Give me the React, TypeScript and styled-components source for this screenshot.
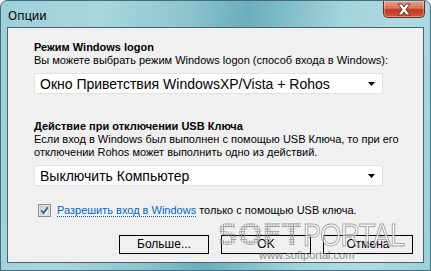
import React from "react";
import styled, { createGlobalStyle } from "styled-components";

const Global = createGlobalStyle`
  * { box-sizing: border-box; }
  html, body { margin: 0; padding: 0; background: #fff; }
`;

const Window = styled.div`
  position: relative;
  width: 431px;
  height: 271px;
  display: flex;
  flex-direction: column;
  border: 1px solid #3f6f7c;
  border-radius: 7px 7px 0 0;
  overflow: hidden;
  background: linear-gradient(
    100deg,
    #9fd0da 0%,
    #a9d6de 22%,
    #8cc3cf 40%,
    #6aaebc 52%,
    #7fbcc8 60%,
    #a3d3dc 72%,
    #b1dbe2 86%,
    #9ccfd9 100%
  );
  font-family: "Liberation Sans", Arial, sans-serif;
`;

const TitleBar = styled.div`
  height: 26px;
  display: flex;
  align-items: flex-start;
  justify-content: space-between;
  padding-left: 7px;
`;

const Title = styled.span`
  margin-top: 8px;
  font-family: "Noto Sans", "Liberation Sans", sans-serif;
  font-size: 12px;
  line-height: 14px;
  color: #000;
`;

const CloseButton = styled.div`
  width: 42px;
  height: 17px;
  margin-right: 5px;
  border: 1px solid #6b2a22;
  border-top: none;
  border-radius: 0 0 5px 5px;
  background: linear-gradient(#e9a08e 0%, #d9735c 45%, #c2381f 55%, #cf5a3f 100%);
  display: flex;
  align-items: center;
  justify-content: center;
  box-shadow: inset 0 0 0 1px rgba(255, 255, 255, 0.35);
`;

const Client = styled.div`
  flex: 1;
  margin: 0 6px 7px 6px;
  border: 1px solid #46646e;
  background: #f0f0f0;
  padding: 13px 0 0 26px;
  display: flex;
  flex-direction: column;
  font-size: 11px;
  line-height: 13px;
  color: #000;
`;

const Heading = styled.div<{ $top?: number }>`
  font-weight: bold;
  margin-top: ${(p) => p.$top ?? 0}px;
`;

const Desc = styled.div`
  width: 372px;
`;

const Select = styled.div<{ $top?: number }>`
  margin-top: ${(p) => p.$top ?? 6}px;
  width: 349px;
  height: 21px;
  background: #fff;
  border: 1px solid #e2e2e2;
  display: flex;
  align-items: center;
  justify-content: space-between;
  padding: 0 7px 0 5px;
  font-size: 14px;
  line-height: 16px;
`;

const CheckRow = styled.label`
  margin-top: 18px;
  margin-left: 4px;
  display: flex;
  align-items: center;
  gap: 6px;
`;

const Link = styled.span`
  color: #0066cc;
  border-bottom: 1px dotted #0066cc;
  line-height: 12px;
`;

const ButtonRow = styled.div`
  margin-top: 18px;
  margin-right: 10px;
  display: flex;
  justify-content: flex-end;
  gap: 12px;
`;

const Button = styled.div`
  width: 90px;
  height: 19px;
  border: 1px solid #000;
  background: #f0f0f0;
  display: flex;
  align-items: center;
  justify-content: center;
  font-size: 12px;
`;

const Watermark = styled.div`
  position: absolute;
  left: 216px;
  top: 219px;
  pointer-events: none;
`;

const MarkRow = styled.div`
  display: flex;
  align-items: flex-end;
  gap: 2px;
  line-height: 30px;
`;

const Dotted = styled.span`
  font-family: "DejaVu Sans", sans-serif;
  font-weight: bold;
  font-size: 30px;
  letter-spacing: -1px;
  color: transparent;
  background: radial-gradient(circle, #a2a2a2 0.9px, transparent 1.2px) 0 0 / 2.6px 2.6px;
  -webkit-background-clip: text;
  background-clip: text;
`;

const Portal = styled.span`
  font-family: "Liberation Sans", Arial, sans-serif;
  font-size: 32px;
  letter-spacing: -1px;
  display: inline-block;
  transform: scaleX(0.85);
  transform-origin: left bottom;
  color: rgba(255, 255, 255, 0.6);
  -webkit-text-stroke: 1px rgba(110, 110, 110, 0.6);
`;

const Site = styled.div`
  margin-left: 42px;
  font-size: 11px;
  line-height: 11px;
  color: rgba(110, 110, 110, 0.8);
`;

function Arrow() {
  return (
    <svg width="7" height="4" viewBox="0 0 7 4">
      <path d="M0 0h7L3.5 4z" fill="#000" />
    </svg>
  );
}

function CheckBox() {
  return (
    <svg width="13" height="13" viewBox="0 0 13 13">
      <defs>
        <linearGradient id="cb" x1="0" y1="0" x2="1" y2="1">
          <stop offset="0" stopColor="#cbcfd5" />
          <stop offset="1" stopColor="#f7f7f7" />
        </linearGradient>
      </defs>
      <rect x="0.5" y="0.5" width="12" height="12" fill="#f4f4f4" stroke="#8e8f8f" />
      <rect x="2" y="2" width="9" height="9" fill="url(#cb)" stroke="#b0b5bc" strokeWidth="0.6" />
      <path d="M3.3 6.3 L5.4 9 L9.8 3.4" fill="none" stroke="#3b5b8d" strokeWidth="1.7" />
    </svg>
  );
}

function CloseX() {
  return (
    <svg width="18" height="13" viewBox="0 0 18 13">
      <path
        d="M3 1h4l2 3 2-3h4l-4 5.5 4 5.5h-4l-2-3-2 3H3l4-5.5z"
        fill="#fff"
        stroke="#5a2019"
        strokeWidth="0.9"
      />
    </svg>
  );
}

export default function App() {
  return (
    <>
      <Global />
      <Window>
        <TitleBar>
          <Title>Опции</Title>
          <CloseButton>
            <CloseX />
          </CloseButton>
        </TitleBar>
        <Client>
          <Heading>Режим Windows logon</Heading>
          <Desc>Вы можете выбрать режим Windows logon (способ входа в Windows):</Desc>
          <Select>
            <span>Окно Приветствия WindowsXP/Vista + Rohos</span>
            <Arrow />
          </Select>

          <Heading $top={26}>Действие при отключении USB Ключа</Heading>
          <Desc>
            Если вход в Windows был выполнен с помощью USB Ключа, то при его отключении Rohos
            может выполнить одно из действий.
          </Desc>
          <Select $top={6}>
            <span>Выключить Компьютер</span>
            <Arrow />
          </Select>

          <CheckRow>
            <CheckBox />
            <span>
              <Link>Разрешить вход в Windows</Link> только с помощью USB ключа.
            </span>
          </CheckRow>

          <ButtonRow>
            <Button>Больше...</Button>
            <Button>OK</Button>
            <Button>Отмена</Button>
          </ButtonRow>
        </Client>
        <Watermark>
          <MarkRow>
            <Dotted>SOFT</Dotted>
            <Portal>PORTAL</Portal>
          </MarkRow>
          <Site>www.softportal.com</Site>
        </Watermark>
      </Window>
    </>
  );
}
